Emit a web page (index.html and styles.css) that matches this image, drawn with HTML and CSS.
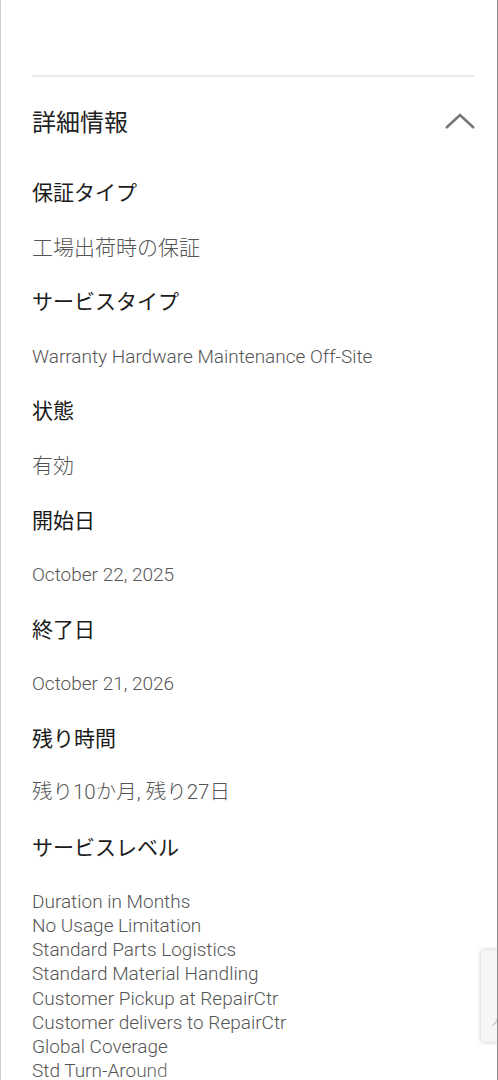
FILE: index.html
```html
<!DOCTYPE html>
<html lang="ja">
<head>
<meta charset="utf-8">
<link rel="stylesheet" href="styles.css">
</head>
<body>
<div class="frame">
  <div class="section">
    <div class="divider"></div>
    <div class="header">
      <h2 class="title">詳細情報</h2>
      <svg class="chevron" width="32" height="18" viewBox="0 0 32 18"><path d="M2 16 L16 3 L30 16" fill="none" stroke="#777" stroke-width="2.6"/></svg>
    </div>
    <dl class="details">
      <dt>保証タイプ</dt>
      <dd>工場出荷時の保証</dd>
      <dt>サービスタイプ</dt>
      <dd class="latin">Warranty Hardware Maintenance Off-Site</dd>
      <dt>状態</dt>
      <dd>有効</dd>
      <dt>開始日</dt>
      <dd class="latin">October 22, 2025</dd>
      <dt>終了日</dt>
      <dd class="latin">October 21, 2026</dd>
      <dt>残り時間</dt>
      <dd class="mixed">残り10か月, 残り27日</dd>
      <dt>サービスレベル</dt>
      <dd class="latin list">Duration in Months<br>No Usage Limitation<br>Standard Parts Logistics<br>Standard Material Handling<br>Customer Pickup at RepairCtr<br>Customer delivers to RepairCtr<br>Global Coverage<br>Std Turn-Around</dd>
    </dl>
  </div>
  <div class="widget"><span class="wglyph">↗</span></div>
  <div class="fade"></div>
</div>
</body>
</html>
```
FILE: styles.css
```css
html, body {
  margin: 0;
  padding: 0;
  background: #fff;
}
body {
  font-family: "Roboto", "Noto Sans CJK JP", sans-serif;
  font-weight: 300;
  overflow: hidden;
}
.frame {
  position: relative;
  width: 498px;
  height: 1080px;
  box-sizing: border-box;
  border-left: 1px solid #cfcfcf;
  border-right: 1px solid #8a8a8a;
  overflow: hidden;
}
.section {
  padding: 75px 22px 0 31px;
}
.divider {
  height: 2px;
  background: #ececec;
}
.header {
  display: flex;
  align-items: center;
  justify-content: space-between;
  height: 87px;
}
.title {
  margin: 0;
  font-family: "Noto Sans CJK JP", sans-serif;
  font-weight: 400;
  font-size: 24px;
  color: #222;
  line-height: 1;
}
.chevron {
  display: block;
  margin-right: -1px;
}
.details {
  margin: 0;
  padding: 0;
}
.details dt {
  margin: 0;
  font-family: "Noto Sans CJK JP", sans-serif;
  font-weight: 400;
  font-size: 21px;
  line-height: 54.6px;
  height: 54.6px;
  color: #1b1b1b;
}
.details dd {
  margin: 0;
  font-family: "Noto Sans CJK JP", sans-serif;
  font-weight: 300;
  font-size: 21px;
  line-height: 54.6px;
  height: 54.6px;
  color: #555;
}
.details dd.latin {
  font-family: "Roboto", sans-serif;
  font-size: 19px;
  line-height: 58px;
  height: 54.6px;
}
.details dd.mixed {
  font-family: "Roboto", "Noto Sans CJK JP", sans-serif;
  font-size: 20.5px;
}
.details dd.list {
  height: auto;
  line-height: 24.2px;
  padding-top: 16px;
}
.widget {
  position: absolute;
  left: 480px;
  top: 950px;
  width: 30px;
  height: 92px;
  background: #f6f6f6;
  border-radius: 4px;
  box-shadow: 0 0 4px rgba(0,0,0,0.25);
}
.wglyph {
  position: absolute;
  left: 10px;
  top: 66px;
  font-size: 11px;
  color: #999;
  font-family: "DejaVu Sans", sans-serif;
}
.fade {
  position: absolute;
  left: 120px;
  width: 260px;
  bottom: 0;
  height: 36px;
  background: radial-gradient(ellipse at 50% 100%, rgba(255,255,255,0.6), rgba(255,255,255,0) 70%);
  pointer-events: none;
}
```
